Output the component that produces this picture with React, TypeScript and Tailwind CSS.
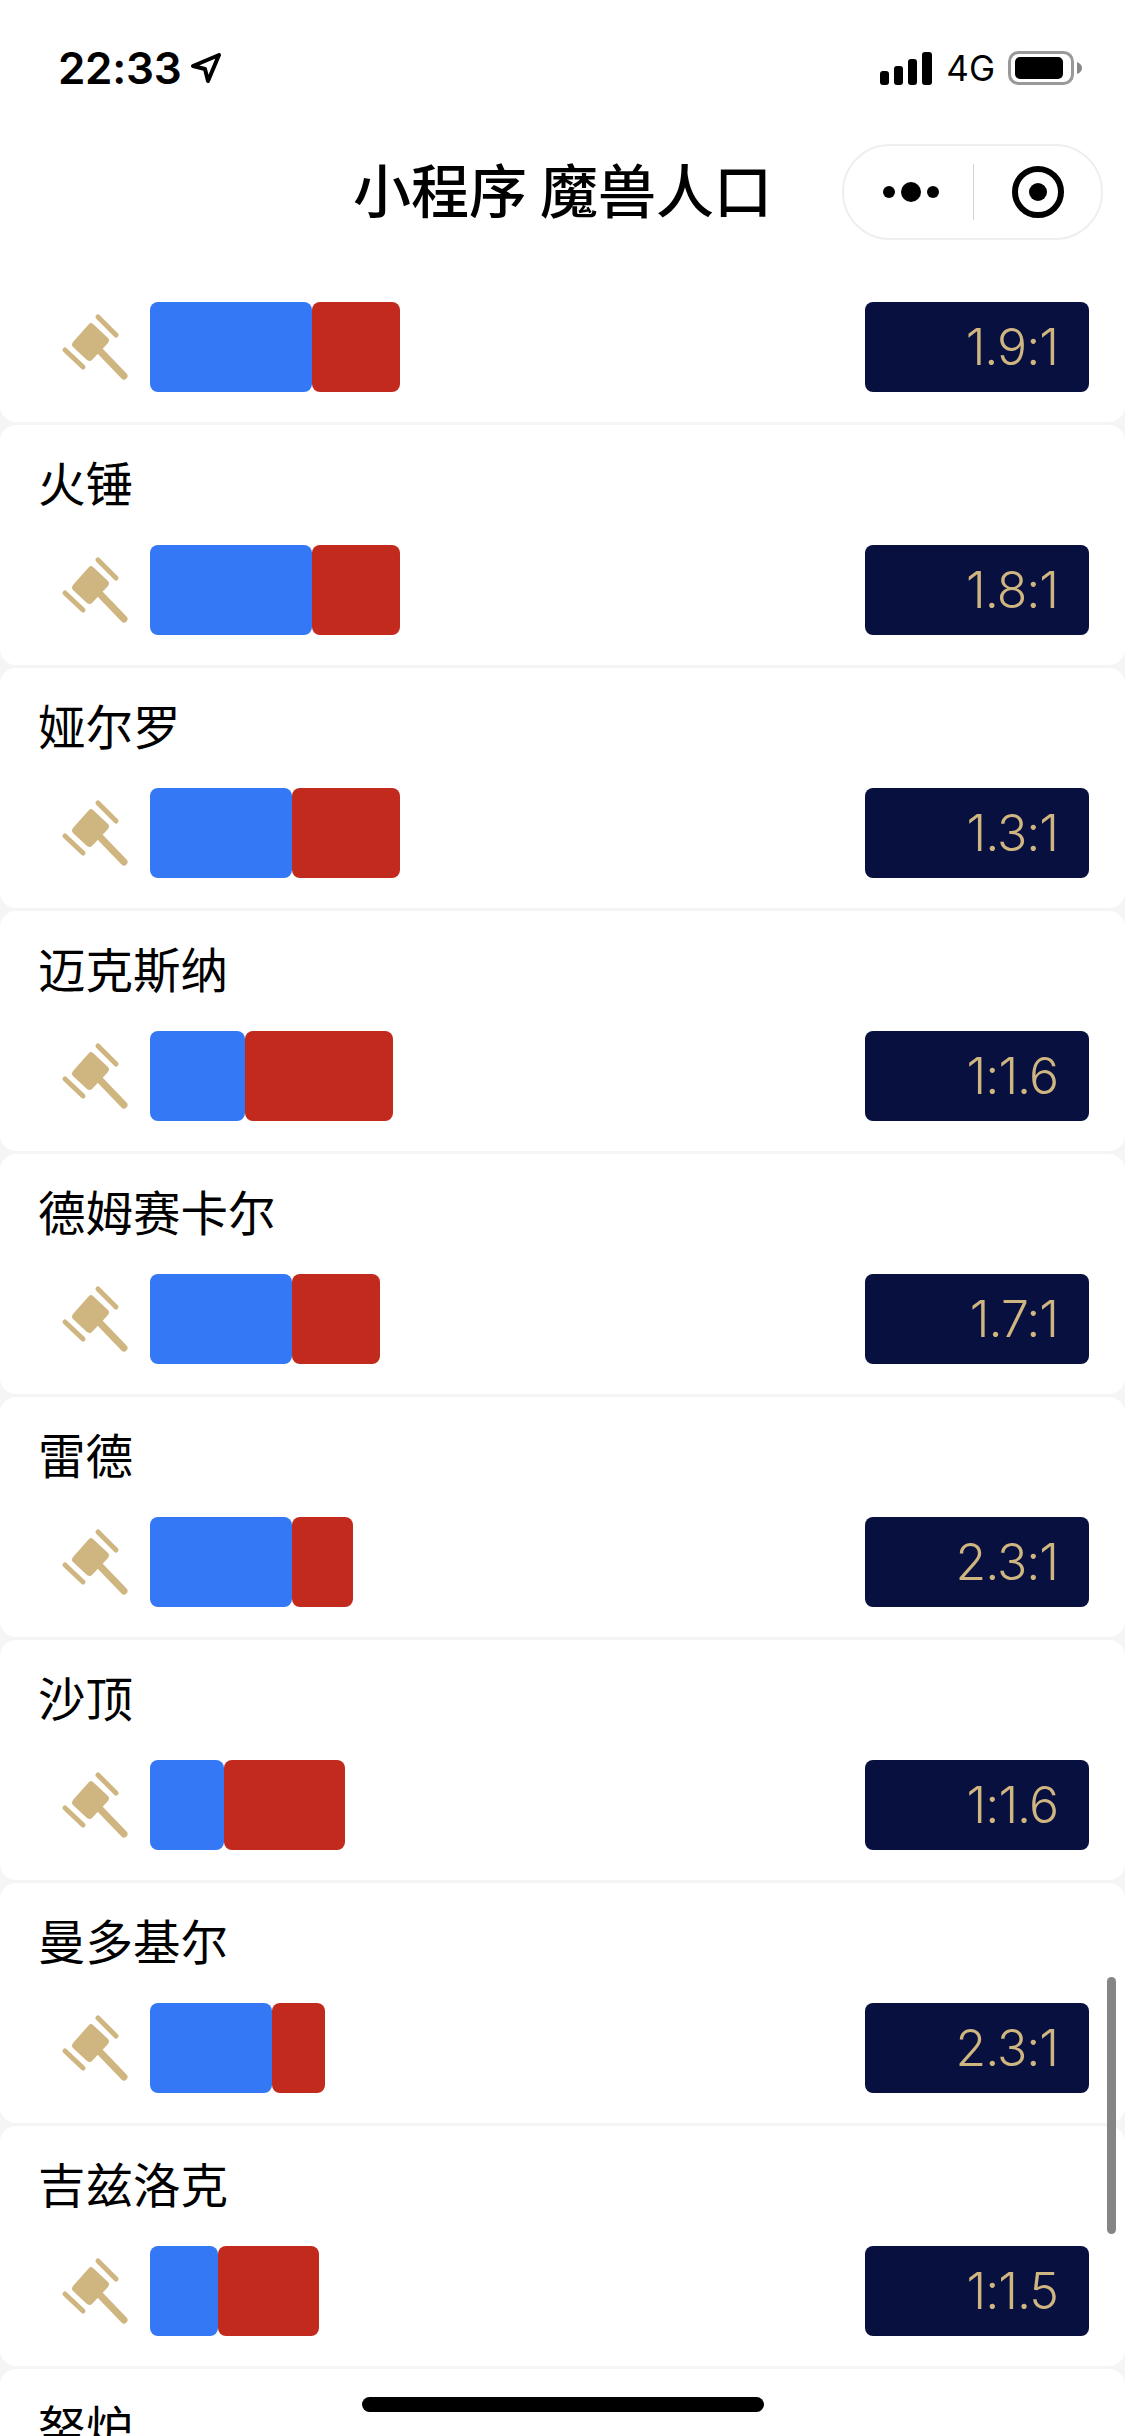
const rows = [
  { name: "", blue: 162, red: 88, ratio: "1.9:1" },
  { name: "火锤", blue: 162, red: 88, ratio: "1.8:1" },
  { name: "娅尔罗", blue: 142, red: 108, ratio: "1.3:1" },
  { name: "迈克斯纳", blue: 95, red: 148, ratio: "1:1.6" },
  { name: "德姆赛卡尔", blue: 142, red: 88, ratio: "1.7:1" },
  { name: "雷德", blue: 142, red: 61, ratio: "2.3:1" },
  { name: "沙顶", blue: 74, red: 121, ratio: "1:1.6" },
  { name: "曼多基尔", blue: 122, red: 53, ratio: "2.3:1" },
  { name: "吉兹洛克", blue: 68, red: 101, ratio: "1:1.5" },
];

function Gavel() {
  return (
    <svg width="110" height="90" viewBox="0 2 110 90" className="shrink-0">
      <path d="M53 24 L68 38 Q70 40 68 43 L52 60 Q50 62 47 60 L33 47 Q31 45 33 42 L49 24 Q51 22 53 24 Z" fill="#CFB580" />
      <g stroke="#CFB580" strokeLinecap="round" fill="none">
        <path d="M58 17 L76 35" strokeWidth="5" />
        <path d="M25 50 L43 67" strokeWidth="5" />
        <path d="M60 51 L84 76" strokeWidth="7" />
      </g>
    </svg>
  );
}

function Row({ name, blue, red, ratio, first }: { name: string; blue: number; red: number; ratio: string; first?: boolean }) {
  return (
    <div className={first ? "bg-white rounded-b-[16px] pt-[40px] pb-[30px]" : "bg-white rounded-[16px] pb-[30px]"}>
      {!first && (
        <div className="h-[120px] flex items-center pl-[38px] pb-[6px] text-[47.5px] text-black">{name}</div>
      )}
      <div className="flex items-center pl-[40px] pr-[36px]">
        <Gavel />
        <div className="flex h-[90px]">
          <div className="h-full rounded-[8px] bg-[#3478F6]" style={{ width: blue }} />
          <div className="h-full rounded-[8px] bg-[#C22A1E]" style={{ width: red }} />
        </div>
        <div className="ml-auto w-[224px] h-[90px] rounded-[8px] bg-[#08103F] flex items-center justify-end pr-[31px] text-[50px] font-light text-[#CFB580] font-['Inter',sans-serif] tracking-[-1px]">
          {ratio}
        </div>
      </div>
    </div>
  );
}

export default function App() {
  return (
    <div className="relative w-[1125px] h-[2436px] overflow-hidden bg-[#F5F5F5] font-['Noto_Sans_CJK_SC','Noto_Sans',sans-serif]">
      <div className="h-[262px] bg-white">
        <div className="h-[136px] flex items-center justify-between pl-[58px] pr-[43px]">
          <div className="flex items-center gap-[10px]">
            <span className="font-['Inter',sans-serif] font-semibold text-[44px] leading-none text-black tracking-[-0.3px]">22:33</span>
            <svg width="30" height="30" viewBox="0 0 30 30" fill="none" stroke="#000" strokeWidth="4" strokeLinejoin="round">
              <path d="M2 13 L28 2 L17 28 L14 16 Z" />
            </svg>
          </div>
          <div className="flex items-center">
            <svg width="52" height="33" viewBox="0 0 52 33" fill="#000">
              <rect x="0" y="19" width="9" height="14" rx="3" />
              <rect x="14" y="14" width="9" height="19" rx="3" />
              <rect x="28" y="7" width="9" height="26" rx="3" />
              <rect x="42" y="0" width="10" height="33" rx="3" />
            </svg>
            <span className="ml-[14px] font-['Inter',sans-serif] text-[35px] leading-none text-black">4G</span>
            <svg className="ml-[13px]" width="74" height="34" viewBox="0 0 74 34">
              <rect x="1.5" y="1.5" width="63" height="31" rx="9" fill="none" stroke="#999" strokeWidth="3" />
              <rect x="7" y="6" width="48" height="22" rx="5" fill="#000" />
              <path d="M69 11 Q74 13 74 17 Q74 21 69 23 Z" fill="#888" />
            </svg>
          </div>
        </div>
        <div className="mt-[8px] grid grid-cols-[1fr_auto_1fr] items-center h-[96px]">
          <div />
          <div className="text-[58px] font-medium text-black leading-none whitespace-nowrap pb-[8px]">小程序 魔兽人口</div>
          <div className="flex justify-end pr-[22px]">
            <div className="w-[261px] h-[96px] rounded-full border-2 border-[#EEEEEE] flex items-center bg-white">
              <svg width="129" height="30" viewBox="-1 0 129 30" fill="#000">
                <circle cx="44" cy="15" r="6" />
                <circle cx="66" cy="15" r="10" />
                <circle cx="88" cy="15" r="6" />
              </svg>
              <div className="w-[1px] h-[56px] bg-[#D5D5D5]" />
              <svg className="ml-[38px]" width="52" height="52" viewBox="0 0 52 52">
                <circle cx="26" cy="26" r="23" fill="none" stroke="#000" strokeWidth="6" />
                <circle cx="26" cy="26" r="9" fill="#000" />
              </svg>
            </div>
          </div>
        </div>
      </div>
      <div className="flex flex-col gap-[3px]">
        {rows.map((r, i) => (
          <Row key={i} {...r} first={i === 0} />
        ))}
        <div className="bg-white rounded-[16px] h-[200px]">
          <div className="h-[120px] flex items-center pl-[38px] pb-[6px] text-[47.5px] text-black">努炉</div>
        </div>
      </div>
      <div className="absolute left-[1107px] top-[1977px] w-[9px] h-[257px] rounded-full bg-[#858585]" />
      <div className="absolute left-[362px] top-[2397px] w-[402px] h-[15px] rounded-full bg-black" />
    </div>
  );
}
